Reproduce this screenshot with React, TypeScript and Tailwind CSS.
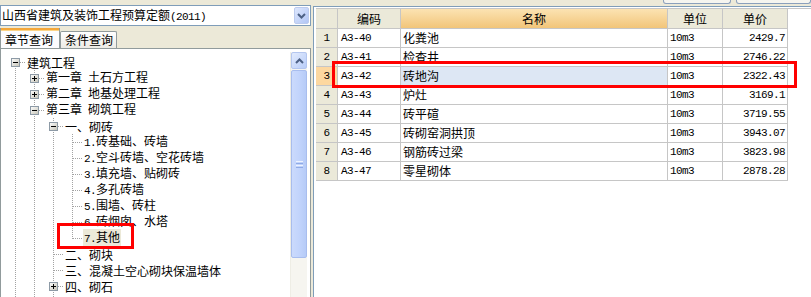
import React from "react";

const CJK = "font-['Noto_Sans_CJK_SC',sans-serif]";
const MONO = "font-['Liberation_Mono',monospace] text-[11px] tracking-[-0.6px]";

// Renders SimSun-like mixed text: ASCII runs are half-width (6px), CJK full-width (12px).
function Mixed({ s }: { s: string }) {
  const parts = s.split(/([\x20-\x7e]+)/).filter(Boolean);
  return (
    <>
      {parts.map((p, i) =>
        /^[\x20-\x7e]+$/.test(p) ? (
          <span key={i} className={`${MONO} whitespace-pre`}>
            {p}
          </span>
        ) : (
          <span key={i}>{p}</span>
        )
      )}
    </>
  );
}

type Own = "first" | "tee" | "ell";
type TreeRow = {
  lv: number;
  text: string;
  box?: "plus" | "minus";
  own: Own;
  anc: boolean[];
  selected?: boolean;
};

const tree: TreeRow[] = [
  { lv: 0, text: "建筑工程", box: "minus", own: "first", anc: [] },
  { lv: 1, text: "第一章 土石方工程", box: "plus", own: "tee", anc: [true] },
  { lv: 1, text: "第二章 地基处理工程", box: "plus", own: "tee", anc: [true] },
  { lv: 1, text: "第三章 砌筑工程", box: "minus", own: "tee", anc: [true] },
  { lv: 2, text: "一、砌砖", box: "minus", own: "tee", anc: [true, true] },
  { lv: 3, text: "1.砖基础、砖墙", own: "tee", anc: [true, true, true] },
  { lv: 3, text: "2.空斗砖墙、空花砖墙", own: "tee", anc: [true, true, true] },
  { lv: 3, text: "3.填充墙、贴砌砖", own: "tee", anc: [true, true, true] },
  { lv: 3, text: "4.多孔砖墙", own: "tee", anc: [true, true, true] },
  { lv: 3, text: "5.围墙、砖柱", own: "tee", anc: [true, true, true] },
  { lv: 3, text: "6.砖烟囱、水塔", own: "tee", anc: [true, true, true] },
  { lv: 3, text: "7.其他", own: "ell", anc: [true, true, true], selected: true },
  { lv: 2, text: "二、砌块", own: "tee", anc: [true, true] },
  { lv: 2, text: "三、混凝土空心砌块保温墙体", own: "tee", anc: [true, true] },
  { lv: 2, text: "四、砌石", box: "plus", own: "tee", anc: [true, true] },
  { lv: 2, text: "五、轻质墙板", own: "tee", anc: [true, true] },
];

const DOT = "#a3a3a3";

function Connector({ own, box }: { own?: Own; box?: "plus" | "minus" }) {
  const y1 = own === "first" ? 8 : 0;
  const y2 = own === "ell" ? 9 : 16;
  return (
    <svg width="19" height="16" className="shrink-0" shapeRendering="crispEdges">
      {own && (
        <>
          <line x1="9.5" y1={y1} x2="9.5" y2={y2} stroke={DOT} strokeDasharray="1 1" />
          <line x1="10" y1="8.5" x2="20" y2="8.5" stroke={DOT} strokeDasharray="1 1" />
        </>
      )}
      {!own && <line x1="9.5" y1="0" x2="9.5" y2="16" stroke={DOT} strokeDasharray="1 1" />}
      {box && (
        <>
          <defs>
            <linearGradient id="bx" x1="0" y1="0" x2="1" y2="1">
              <stop offset="0" stopColor="#ffffff" />
              <stop offset="1" stopColor="#c4c2b5" />
            </linearGradient>
          </defs>
          <rect x="5.5" y="4.5" width="8" height="8" fill="url(#bx)" stroke="#8d9aa6" />
          <line x1="7" y1="8.5" x2="12" y2="8.5" stroke="#000" />
          {box === "plus" && <line x1="9.5" y1="6" x2="9.5" y2="11" stroke="#000" />}
        </>
      )}
    </svg>
  );
}

function Tree() {
  return (
    <div className={`pt-[5px] pl-[5px] ${CJK} text-[12px] leading-[16px] text-black`}>
      {tree.map((r, i) => (
        <div key={i} className="flex h-[16px] items-center">
          {r.anc.map((a, j) => (a ? <Connector key={j} /> : <div key={j} className="w-[19px] shrink-0" />))}
          <Connector own={r.own} box={r.box} />
          <span
            className={`ml-[1px] whitespace-nowrap px-[1px] leading-[15px] ${r.selected ? "bg-[#ece9d8]" : ""}`}
          >
            <Mixed s={r.text} />
          </span>
        </div>
      ))}
    </div>
  );
}

function Scrollbar() {
  return (
    <div className="flex h-full w-[17px] flex-col bg-[#f6f5f0] border-l border-[#eeede5]">
      <div className="flex h-[17px] items-center justify-center rounded-[2px] border border-[#b4c6ef] bg-gradient-to-br from-[#e2ebfd] to-[#b9cdf8]">
        <svg width="9" height="6" viewBox="0 0 9 6">
          <path d="M1 5 L4.5 1.5 L8 5" fill="none" stroke="#4d6185" strokeWidth="2" />
        </svg>
      </div>
      <div className="mt-[1px] flex h-[188px] items-center justify-center rounded-[2px] border border-[#a8bdee] bg-gradient-to-r from-[#cbdafc] via-[#c2d4fc] to-[#b6cbf7]">
        <div className="flex flex-col gap-[1px]">
          <div className="h-[1px] w-[7px] bg-[#eef3fe]" />
          <div className="h-[1px] w-[7px] bg-[#8faae6]" />
          <div className="h-[1px] w-[7px] bg-[#eef3fe]" />
          <div className="h-[1px] w-[7px] bg-[#8faae6]" />
        </div>
      </div>
    </div>
  );
}

type GridRow = { no: number; code: string; name: string; unit: string; price: string };
const rows: GridRow[] = [
  { no: 1, code: "A3-40", name: "化粪池", unit: "10m3", price: "2429.7" },
  { no: 2, code: "A3-41", name: "检查井", unit: "10m3", price: "2746.22" },
  { no: 3, code: "A3-42", name: "砖地沟", unit: "10m3", price: "2322.43" },
  { no: 4, code: "A3-43", name: "炉灶", unit: "10m3", price: "3169.1" },
  { no: 5, code: "A3-44", name: "砖平碹", unit: "10m3", price: "3719.55" },
  { no: 6, code: "A3-45", name: "砖砌窑洞拱顶", unit: "10m3", price: "3943.07" },
  { no: 7, code: "A3-46", name: "钢筋砖过梁", unit: "10m3", price: "3823.98" },
  { no: 8, code: "A3-47", name: "零星砌体", unit: "10m3", price: "2878.28" },
];

const CELL = "border-r border-b border-[#c6c6c6] h-[19px] flex items-center";

function Grid() {
  return (
    <div className={`grid grid-cols-[22px_63px_267px_55px_65px] ${CJK} text-[12px] leading-[14px] text-black`}>
      <div className={`${CELL} h-[20px] bg-[#ebe9d9]`} />
      <div className={`${CELL} h-[20px] justify-center bg-[#ebe9d9]`}>编码</div>
      <div className={`${CELL} h-[20px] justify-center bg-gradient-to-b from-[#fbe3b2] to-[#f2c579]`}>名称</div>
      <div className={`${CELL} h-[20px] justify-center bg-[#ebe9d9]`}>单位</div>
      <div className={`${CELL} h-[20px] justify-center bg-[#ebe9d9]`}>单价</div>
      {rows.map((r) => {
        const sel = r.no === 3;
        return (
          <React.Fragment key={r.no}>
            <div className={`${CELL} justify-center ${sel ? "bg-[#fdd8a0]" : "bg-[#ebe9d9]"}`}>
              <Mixed s={String(r.no)} />
            </div>
            <div className={`${CELL} bg-white pl-[3px]`}>
              <Mixed s={r.code} />
            </div>
            <div className={`${CELL} pl-[2px] ${sel ? "bg-[#dde7f4]" : "bg-white"}`}>{r.name}</div>
            <div className={`${CELL} bg-white pl-[2px]`}>
              <Mixed s={r.unit} />
            </div>
            <div className={`${CELL} justify-end bg-white pr-[2px]`}>
              <Mixed s={r.price} />
            </div>
          </React.Fragment>
        );
      })}
    </div>
  );
}

export default function App() {
  return (
    <div className={`relative flex h-[297px] w-[811px] overflow-hidden bg-[#ece9d8] ${CJK}`}>
      {/* left: quota selector + chapter tree */}
      <div className="flex w-[311px] shrink-0 flex-col">
        <div className="mt-[5px] flex h-[21px] w-[311px] items-center border border-[#7f9db9] bg-white pl-[1px] text-[12px] text-black">
          <span className="flex-1 whitespace-nowrap leading-[16px]">
            <Mixed s="山西省建筑及装饰工程预算定额(2011)" />
          </span>
          <div className="mr-[1px] flex h-[17px] w-[15px] items-center justify-center rounded-[2px] border border-[#bccbee] bg-gradient-to-br from-[#dde7fd] to-[#b2c6f5]">
            <svg width="9" height="6" viewBox="0 0 9 6">
              <path d="M1 1 L4.5 4.5 L8 1" fill="none" stroke="#4d6185" strokeWidth="2" />
            </svg>
          </div>
        </div>

        <div className="mt-[2px] flex h-[20px] items-end text-[12px] leading-[16px] text-black">
          <div className="flex h-[20px] w-[60px] flex-col border-x border-[#919b9c] bg-[#fcfcfe]">
            <div className="h-[2px] bg-[#f4a73a]" />
            <div className="h-[1px] bg-[#fcd487]" />
            <div className="pl-[4px] pt-[1px]">章节查询</div>
          </div>
          <div className="flex h-[17px] w-[57px] items-center rounded-t-[2px] border border-b-0 border-[#919b9c] bg-gradient-to-b from-white to-[#ecebe5] pl-[4px]">
            条件查询
          </div>
        </div>

        <div className="flex min-h-0 flex-1 border border-b-0 border-[#919b9c] bg-white">
          <div className="min-w-0 flex-1 overflow-hidden">
            <Tree />
          </div>
          <div className="mt-[3px] mr-[3px] h-[260px]">
            <Scrollbar />
          </div>
        </div>
      </div>

      {/* right: quota item grid */}
      <div className="flex min-w-0 flex-1 flex-col">
        <div className="flex h-[6px] shrink-0 items-start">
          <div className="ml-[352px] h-[4px] w-[72px] rounded-b-[3px] border border-t-0 border-[#8ba0bc] bg-[#f6f5ef]" />
          <div className="ml-[5px] h-[4px] w-[80px] rounded-b-[3px] border border-t-0 border-[#8ba0bc] bg-[#f6f5ef]" />
        </div>
        <div className="ml-[2px] flex-1 border-l border-t border-[#7f9db9] bg-white pl-[2px] pt-[1px]">
          <div className="border-t border-[#c6c6c6]">
            <Grid />
          </div>
        </div>
      </div>

      {/* red annotation boxes */}
      <div className="absolute left-[57px] top-[223px] h-[26px] w-[77px] border-[3px] border-[#ff0000]" />
      <div className="absolute left-[332px] top-[61px] h-[27px] w-[465px] border-[3px] border-[#ff0000]" />
    </div>
  );
}
